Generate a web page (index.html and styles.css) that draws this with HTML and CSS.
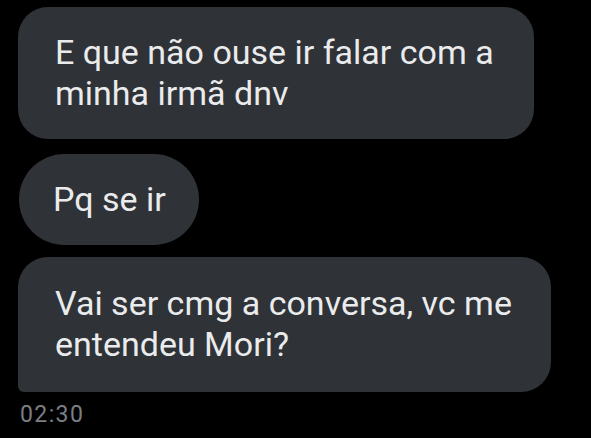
FILE: index.html
```html
<!DOCTYPE html>
<html lang="pt">
<head>
<meta charset="utf-8">
<title>DM</title>
<link rel="stylesheet" href="styles.css">
</head>
<body>
<main class="chat">
  <div class="bubble bubble--first">E que não ouse ir falar com a<br>minha irmã dnv</div>
  <div class="bubble bubble--pill">Pq se ir</div>
  <div class="bubble bubble--last">Vai ser cmg a conversa, vc me<br>entendeu Mori?</div>
  <div class="time">02:30</div>
</main>
</body>
</html>
```
FILE: styles.css
```css
html, body {
  margin: 0;
  padding: 0;
  background: #000;
}
body {
  width: 591px;
  height: 438px;
  overflow: hidden;
  font-family: Roboto, "Liberation Sans", sans-serif;
}
.chat {
  display: flex;
  flex-direction: column;
  align-items: flex-start;
  padding: 7px 0 0 18px;
}
.bubble {
  background: #2f3236;
  color: #eaebec;
  font-size: 34px;
  line-height: 41px;
  white-space: nowrap;
  padding: 25px 0 25px 37px;
  box-sizing: border-box;
  border-radius: 30px;
}
.bubble--first {
  width: 516px;
}
.bubble--pill {
  margin-top: 15px;
  margin-left: 1px;
  padding: 25px 33px 25px 34px;
  border-radius: 46px;
}
.bubble--last {
  margin-top: 12px;
  width: 533px;
  padding-top: 26px;
  padding-bottom: 27px;
  border-radius: 30px 30px 30px 6px;
}
.time {
  margin: 9px 0 0 2px;
  font-size: 23px;
  line-height: 28px;
  letter-spacing: 1.4px;
  color: #7b7f84;
}
```
